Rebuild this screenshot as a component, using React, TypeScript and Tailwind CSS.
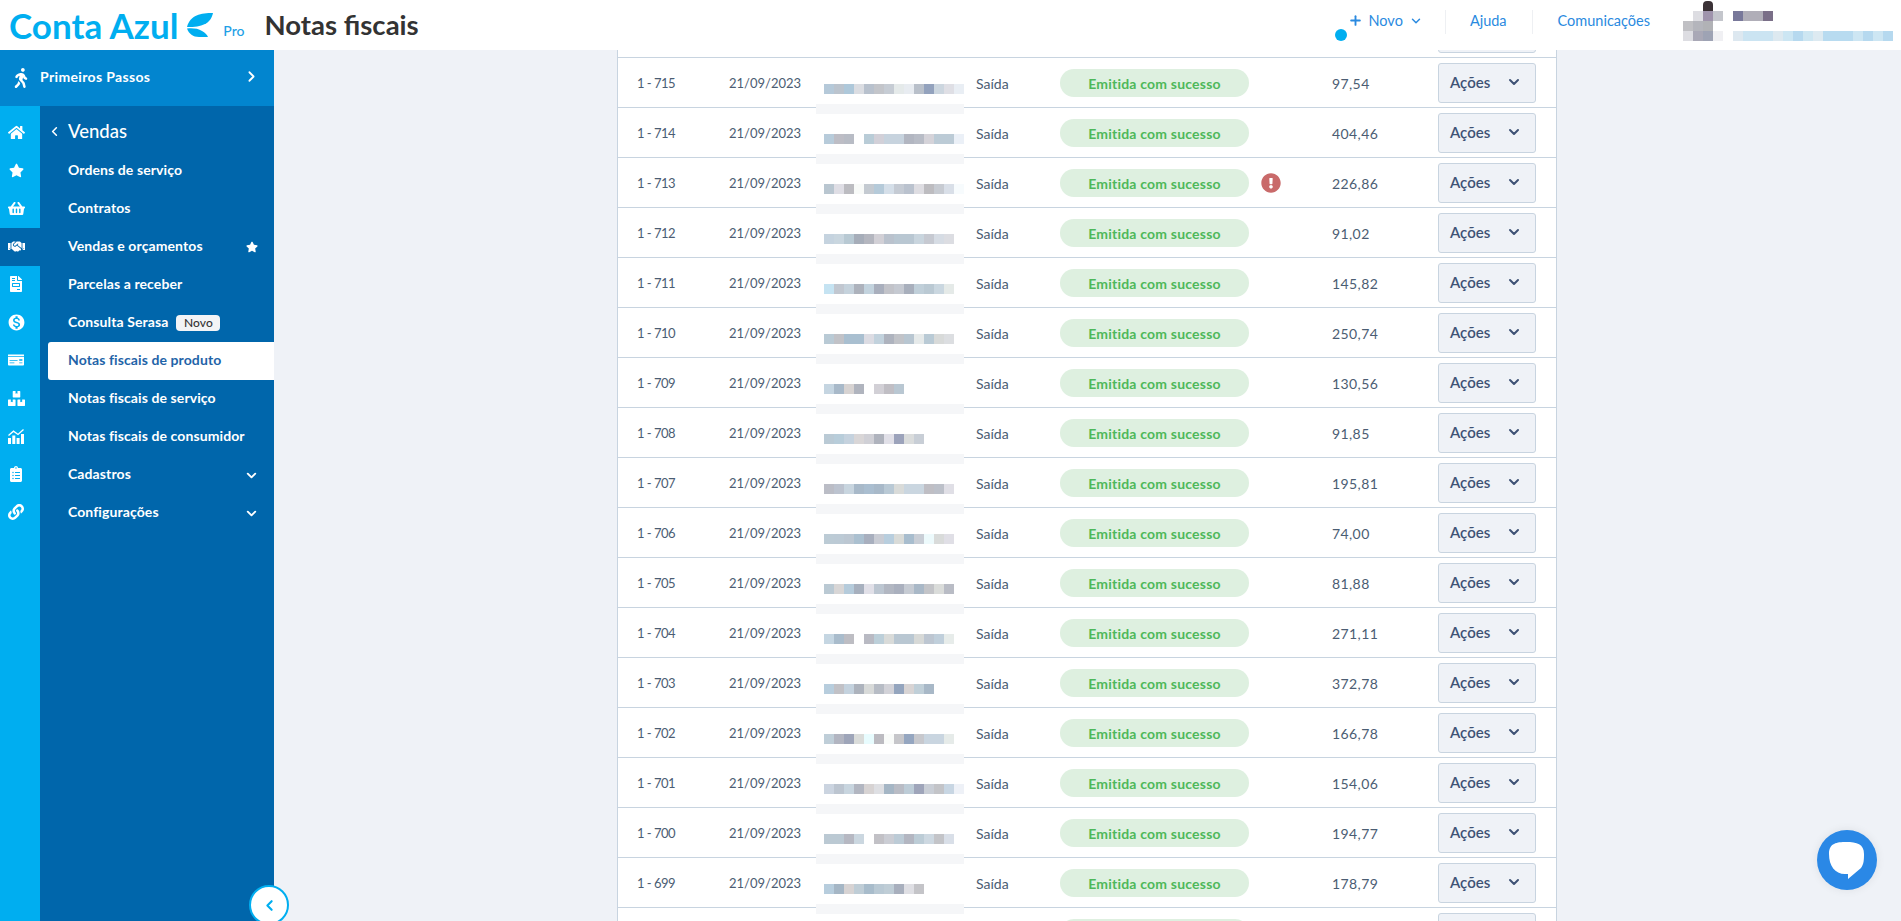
import { ChevronDown, ChevronLeft, ChevronRight, Plus } from "lucide-react";
import {
  FaBoxes,
  FaClipboardList,
  FaExclamationCircle,
  FaFileInvoice,
  FaHandshake,
  FaHome,
  FaLink,
  FaMoneyCheck,
  FaShoppingBasket,
  FaStar,
  FaWalking,
} from "react-icons/fa";
import { MdMonetizationOn } from "react-icons/md";

const w = "transparent";

const rows: { id: number; value: string; cells: string[]; warn?: boolean }[] = [
  { id: 716, value: "", cells: [] },
  { id: 715, value: "97,54", cells: ["#b5c9d9", "#bbc4ce", "#aec8da", "#dbdde2", "#b8c1cd", "#c3c5ca", "#c6ccd4", "#e5eaea", "#e8ecf1", "#b9c0ca", "#93a2bd", "#ccd6df", "#dfdfe5", "#e9eef4"] },
  { id: 714, value: "404,46", cells: ["#b7cbda", "#bdbdc5", "#b8bcc5", w, "#b9ccd7", "#d2d0d8", "#c7d3de", "#c7d3de", "#b2b6c1", "#b8bcc6", "#d5d3d9", "#bccbd6", "#bccbd6", "#ebf0f7"] },
  { id: 713, value: "226,86", warn: true, cells: ["#b9c6d0", "#dfdee5", "#bcbcc1", "#f8faf8", "#c4cad1", "#b5cad9", "#d5dfe9", "#c5cbd4", "#bac2ce", "#dedde2", "#bdbcc0", "#c7cbd2", "#d9dfe8", "#f7fbfd"] },
  { id: 712, value: "91,02", cells: ["#c5d3df", "#c9d6df", "#b8c9d3", "#a6adb9", "#b4b6bf", "#d2d0d6", "#bac2cd", "#b9c7d2", "#b9c7d2", "#c9d5de", "#c6c9d1", "#d6dce4", "#dcdde2"] },
  { id: 711, value: "145,82", cells: ["#c5e3f2", "#c1c7d0", "#c5d2dc", "#adb2bc", "#c3d3de", "#a9afbd", "#c2c3c9", "#c5c9d1", "#a8afbc", "#c0cfd9", "#bac9d3", "#cad7e0", "#e5eae8"] },
  { id: 710, value: "250,74", cells: ["#b9cad5", "#c1c2c7", "#a9bfd0", "#a9bfd0", "#dcdce3", "#c2d2dd", "#aeb3be", "#c1c3c8", "#b8c6d1", "#e6eaea", "#b9cad5", "#d8dad9", "#dcdee1"] },
  { id: 709, value: "130,56", cells: ["#c5d5e1", "#a8b9c9", "#d7d3d2", "#b0b4be", w, "#d2d0d6", "#c0bec4", "#b9c7d2"] },
  { id: 708, value: "91,85", cells: ["#bacad5", "#b8cdda", "#c5d2de", "#d9d6d7", "#d0d0d6", "#afb3bd", "#e1e0e8", "#9ca3bb", "#dadcdc", "#c8ced6"] },
  { id: 707, value: "195,81", cells: ["#bbbdc6", "#bcc3cf", "#c8d5df", "#a8b9c9", "#aabed0", "#a8b9c9", "#b9c9d5", "#d9dbd9", "#cad6e0", "#cad6e0", "#bfbec4", "#bcc0c9", "#e0dfe6"] },
  { id: 706, value: "74,00", cells: ["#bccbd5", "#bccad5", "#bcc7d2", "#abc0d0", "#a8afbe", "#c9ccd4", "#b8cede", "#d9dbd8", "#a8bdce", "#c9ced6", "#edfafc", "#d9dbda", "#e0dfe6"] },
  { id: 705, value: "81,88", cells: ["#bac9d3", "#d8d6d6", "#b5cbdb", "#a7b0be", "#e1e0e8", "#bcc6d1", "#b2b7c2", "#aab0be", "#c6cbd3", "#a9b8c7", "#c3c4c8", "#dadcda", "#b9bcc5"] },
  { id: 704, value: "271,11", cells: ["#c5d6e2", "#a9bccc", "#bdbdc3", w, "#b9bac3", "#bccfd9", "#d9dbd9", "#b9c7d2", "#b9c7d2", "#d7d9d7", "#bdc6d1", "#c0cfdb", "#e7ecea"] },
  { id: 703, value: "372,78", cells: ["#b7cddd", "#c1c1c6", "#c4d2de", "#adb3bd", "#d8dad9", "#b7bcc5", "#d2d2d8", "#94a5be", "#d8d4d4", "#c0cfd8", "#a8b8c7"] },
  { id: 702, value: "166,78", cells: ["#bfced8", "#b2b5c1", "#9ea5b9", "#dadcda", "#e8fcfe", "#bcbbc1", "#f9fbf9", "#c6c6ca", "#95a6c0", "#c7c8cd", "#c9d5e0", "#c9d5e0", "#e6ebe9"] },
  { id: 701, value: "154,06", cells: ["#cbd4e0", "#bcc5d0", "#c8d5df", "#b2b6c1", "#d7d3d3", "#dedfe3", "#a5b6c5", "#b9bcc5", "#bdccd7", "#9fa5ba", "#c9ced6", "#c3c4c8", "#c8d6e3", "#eef1f7"] },
  { id: 700, value: "194,77", cells: ["#bbc9d3", "#bbc9d3", "#b6b8c2", "#cbd7e0", w, "#c2c1c6", "#cbcdd4", "#bccbd6", "#b3b6c1", "#bcccd6", "#cdd8e1", "#c3c4c8", "#d9dfe8"] },
  { id: 699, value: "178,79", cells: ["#b7cddd", "#a5b6c5", "#d7d3d3", "#bfcdd6", "#a8bccb", "#b9c9d4", "#bfcdd6", "#a8afbd", "#dfdfe4", "#c4c4c8"] },
  { id: 698, value: "", cells: [] },
];

const menu = [
  { label: "Ordens de serviço" },
  { label: "Contratos" },
  { label: "Vendas e orçamentos", star: true },
  { label: "Parcelas a receber" },
  { label: "Consulta Serasa", badge: true },
  { label: "Notas fiscais de produto", active: true },
  { label: "Notas fiscais de serviço" },
  { label: "Notas fiscais de consumidor" },
  { label: "Cadastros", more: true },
  { label: "Configurações", more: true },
];

function ChartIcon() {
  return (
    <svg width="16" height="15" viewBox="0 0 16 15" fill="white">
      <rect x="0" y="9" width="3" height="6" />
      <rect x="4.3" y="6.5" width="3" height="8.5" />
      <rect x="8.6" y="9" width="3" height="6" />
      <rect x="13" y="5" width="3" height="10" />
      <path d="M0.5 6.5 L5.5 2.2 L10 5.5 L15.5 0.5" fill="none" stroke="white" strokeWidth="1.3" />
    </svg>
  );
}

function LogoMark() {
  return (
    <svg width="26" height="24" viewBox="0 0 26 24" fill="#00aef0">
      <path d="M26 0 C14 0 3 2 0 14 C8 14 13 13.5 18 11 C22 9 25 5 26 0 Z" />
      <path d="M0 15.5 C6 15 11 15.5 15 18 C18 19.5 20 21.5 21 24 L12 24 C6 24 2 21 0 15.5 Z" />
    </svg>
  );
}

function Rail() {
  const icons = [
    <FaHome size={17} />,
    <FaStar size={15} />,
    <FaShoppingBasket size={17} />,
    <FaHandshake size={17} />,
    <FaFileInvoice size={16} />,
    <MdMonetizationOn size={19} />,
    <FaMoneyCheck size={16} />,
    <FaBoxes size={17} />,
    <ChartIcon />,
    <FaClipboardList size={16} />,
    <FaLink size={16} />,
  ];
  return (
    <div className="w-10 shrink-0 bg-[#00aef0] pt-2 text-white">
      {icons.map((icon, i) => (
        <div key={i} className={`h-[38px] w-10 pr-2 pb-[2px] flex items-center justify-center ${i === 3 ? "bg-[#0066ab]" : ""}`}>
          {icon}
        </div>
      ))}
    </div>
  );
}

function Sidebar() {
  return (
    <aside className="relative z-10 w-[274px] shrink-0 flex flex-col font-['Lato',sans-serif]">
      <div className="h-14 shrink-0 bg-[#0285cf] text-white flex items-center pb-1">
        <div className="w-10 pl-[2px] pt-1 flex justify-center">
          <FaWalking size={20} />
        </div>
        <span className="text-[14px] font-bold tracking-[0.35px]">Primeiros Passos</span>
        <ChevronRight size={17} strokeWidth={2.5} className="ml-auto mr-[14px]" />
      </div>
      <div className="flex-1 flex min-h-0">
        <Rail />
        <nav className="flex-1 bg-[#0066ab] pt-2 text-white">
          <div className="h-[38px] pb-[3px] flex items-center">
            <ChevronLeft size={15} strokeWidth={2.5} className="ml-[7px] mr-[6px]" />
            <span className="text-[18.5px] font-medium">Vendas</span>
          </div>
          {menu.map((item) => (
            <div
              key={item.label}
              className={`h-[38px] ml-2 pl-5 pr-[14px] pb-[3px] flex items-center text-[14px] font-bold tracking-[0.1px] ${item.active ? "bg-white text-[#1f64a8] rounded-l-[3px]" : ""}`}
            >
              <span>{item.label}</span>
              {item.badge && (
                <span className="ml-2 mt-[2px] h-4 w-11 rounded-[4px] bg-[#f3f4f6] text-[#333] text-[12px] font-medium flex items-center justify-center">
                  Novo
                </span>
              )}
              {item.star && <FaStar size={12} className="ml-auto mr-[2px] mt-[2px]" />}
              {item.more && <ChevronDown size={15} strokeWidth={3} className="ml-auto mr-px mt-[3px]" />}
            </div>
          ))}
        </nav>
      </div>
      <button className="absolute -right-[15px] -bottom-1 w-10 h-10 rounded-full bg-white border-2 border-[#00aef0] flex items-center justify-center text-[#00aef0]">
        <ChevronLeft size={17} strokeWidth={3} />
      </button>
    </aside>
  );
}

function Header() {
  const email = ["#dde8f0", "#cbe4f2", "#cbe4f2", "#cbe4f2", "#dde9f0", "#cce6f3", "#b6d9ef", "#cde6f2", "#ddeaf1", "#b8dbf0", "#b8dbf0", "#b8dbf0", "#cde6f3", "#b6d9ef", "#cde6f3", "#b6d9ef"];
  const avatar = [
    [w, "#dddde2", "#9f94ac", "#c4c6cc"],
    ["#c0c0c4", "#b4b5bc", "#b1b2b6", w],
    ["#dddde2", "#a9a8b6", "#9ea3b4", "#f0f0f3"],
  ];
  return (
    <header className="relative z-20 h-[50px] shrink-0 bg-white flex items-center font-['Lato',sans-serif]">
      <span className="ml-[9px] text-[#00aef0] text-[35px] font-bold leading-none">Conta Azul</span>
      <div className="ml-[9px]">
        <LogoMark />
      </div>
      <span className="ml-[10px] mt-[11px] text-[#1ea0e6] text-[14px] font-medium">Pro</span>
      <h1 className="ml-5 text-[27.5px] font-bold text-[#333]">Notas fiscais</h1>
      <div className="ml-auto flex items-center text-[14.5px] text-[#2a8ae0]">
        <div className="relative mb-[9px] flex items-center">
          <span className="absolute -left-[13px] top-[19px] w-3 h-3 rounded-full bg-[#00aef0]" />
          <Plus size={15} strokeWidth={3} />
          <span className="ml-[6px]">Novo</span>
          <ChevronDown size={14} strokeWidth={2.5} className="ml-[6px]" />
        </div>
        <div className="ml-[22px] mb-[6px] w-px h-6 bg-[#eef0f3]" />
        <span className="ml-6 mb-[9px]">Ajuda</span>
        <div className="ml-[25px] mb-[6px] w-px h-6 bg-[#eef0f3]" />
        <span className="ml-[25px] mb-[9px]">Comunicações</span>
        <div className="relative ml-[33px] mt-[2px] flex flex-col w-10">
          <i className="absolute -top-[10px] left-5 w-[10px] h-[10px] rounded-t-[4px] bg-[#3b3236]" />
          {avatar.map((row, i) => (
            <div key={i} className="flex h-[10px]">
              {row.map((c, j) => (
                <i key={j} className="w-[10px] h-[10px]" style={{ background: c }} />
              ))}
            </div>
          ))}
        </div>
        <div className="ml-[10px] mr-2 w-40 h-[30px] mt-[2px] flex flex-col justify-between">
          <div className="flex h-[10px]">
            <i className="w-[10px] bg-[#78789a]" />
            <i className="w-5 bg-[#b0aeb8]" />
            <i className="w-[10px] bg-[#7a6f88]" />
          </div>
          <div className="flex h-[10px]">
            {email.map((c, i) => (
              <i key={i} className="w-[10px]" style={{ background: c }} />
            ))}
          </div>
        </div>
      </div>
    </header>
  );
}

function Row({ id, value, cells, warn }: (typeof rows)[number]) {
  // the first and last rows are cut by the header and the window edge, no text shows
  const whole = cells.length > 0;
  return (
    <div className="h-[50px] pt-px flex items-center border-b border-[#c8d4e0] text-[14px] text-[#4b5d73]">
      <div className="w-[111px] pl-[19px] pt-[2px] text-[13px] tracking-[-0.5px]">{whole && `1 - ${id}`}</div>
      <div className="w-[95px] pt-[2px] text-[13px]">{whole && "21/09/2023"}</div>
      <div className="relative self-stretch w-[152px]">
        {whole && (
          <>
            <div className="flex h-[10px] mt-[25px]">
              {cells.map((c, i) => (
                <i key={i} className="w-[10px] h-[10px]" style={{ background: c }} />
              ))}
            </div>
            <div className="absolute -left-2 top-[45px] w-[148px] h-[10px] bg-[#f5f6f8]" />
          </>
        )}
      </div>
      <div className="w-[84px]">{whole && "Saída"}</div>
      <div className="w-[189px] h-7 rounded-full bg-[#def0e0] text-[#4eb85a] font-bold tracking-[0.2px] flex items-center justify-center">
        {whole && "Emitida com sucesso"}
      </div>
      <div className="w-[83px] pl-3">
        {warn && <FaExclamationCircle size={20} className="text-[#c96a6a]" />}
      </div>
      <div className="w-[106px] pt-px tracking-[0.4px]">{value}</div>
      <button className="w-[98px] h-10 pb-[2px] bg-[#eff2f7] border border-[#c8d4e0] rounded-[3px] text-[#3e5275] text-[15px] font-semibold flex items-center pl-[11px]">
        {whole && "Ações"}
        <ChevronDown size={16} strokeWidth={3} className="ml-auto mr-[13px]" />
      </button>
    </div>
  );
}

export default function App() {
  return (
    <div className="relative h-[921px] overflow-hidden flex flex-col bg-[#eff2f7]">
      <Header />
      <div className="flex-1 flex min-h-0">
        <Sidebar />
        <main className="flex-1 min-w-0 overflow-hidden pl-[343px] font-['Lato',sans-serif]">
          <div className="w-[940px] -mt-[42px] bg-white border-x border-[#c8d4e0]">
            {rows.map((r) => (
              <Row key={r.id} {...r} />
            ))}
          </div>
        </main>
      </div>
      <button className="absolute right-6 bottom-[31px] w-[60px] h-[60px] rounded-full bg-[#2a88e6] shadow-[0_0_10px_rgba(0,0,0,0.08)] z-20">
        <svg width="60" height="60" viewBox="0 0 60 60" fill="white">
          <path d="M29 12 C20 12 12 13 12 24 C12 36 18 44 28 44 L31 44 L31 49 L44 38 C47 34 47 29 47 24 C47 14 40 12 29 12 Z" />
        </svg>
      </button>
    </div>
  );
}
